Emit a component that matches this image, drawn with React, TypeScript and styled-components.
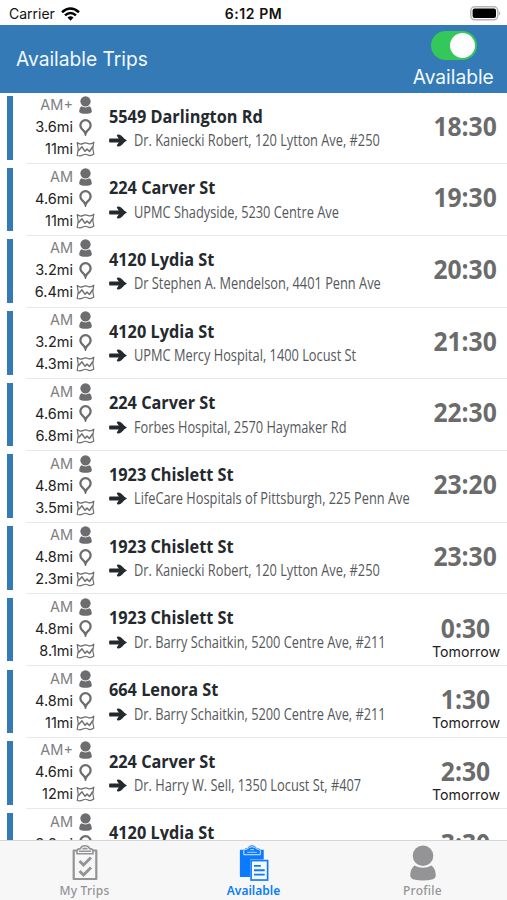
import React from "react";
import styled, { createGlobalStyle } from "styled-components";

const GlobalStyle = createGlobalStyle`
  *, *::before, *::after { box-sizing: border-box; }
  body { margin: 0; background: #fff; overflow: hidden; font-family: Inter, "Liberation Sans", sans-serif; }
  svg { display: block; flex: none; }
`;

const Screen = styled.main`
  width: 507px;
  height: 900px;
  display: flex;
  flex-direction: column;
  overflow: hidden;
  background: #fff;
`;

/* Text drawn narrower or wider than its font's own width. */
const Scaled = styled.span<{ $scale: number; $origin?: string }>`
  display: inline-block;
  white-space: nowrap;
  transform: scaleX(${(p) => p.$scale});
  transform-origin: ${(p) => p.$origin ?? "left"} center;
`;

const StatusBar = styled.div`
  height: 25px;
  flex: none;
  display: grid;
  grid-template-columns: 1fr auto 1fr;
  align-items: center;
  padding: 2px 6px 0 9px;
  color: #111;
  font-size: 14px;
  line-height: 20px;
`;
const Carrier = styled.div`
  display: flex;
  align-items: center;
  gap: 6px;
`;
const Clock = styled.div`
  margin-right: 3px;
  font-weight: 600;
  letter-spacing: 0.55px;
`;
const BatteryBox = styled.div`
  justify-self: end;
`;

const Header = styled.header`
  height: 67.5px;
  flex: none;
  display: flex;
  justify-content: space-between;
  padding: 0 13px 0 16px;
  background: #337ab7;
  color: #f2f8fd;
`;
const HeaderTitle = styled.h1`
  margin: 0;
  font-size: 20px;
  font-weight: 400;
  line-height: 68px;
`;
const Availability = styled.div`
  width: 81px;
  padding-top: 6px;
  display: flex;
  flex-direction: column;
  align-items: center;
  font-size: 20px;
  line-height: 24px;
`;
const Toggle = styled.div`
  width: 46px;
  height: 28.5px;
  flex: none;
  padding: 1.5px;
  margin: 0 0 5px;
  border-radius: 15px;
  background: #34c759;
  display: flex;
  justify-content: flex-end;
`;
const Knob = styled.div`
  width: 25.5px;
  height: 25.5px;
  border-radius: 50%;
  background: #fff;
`;

const List = styled.section`
  flex: 1;
  min-height: 0;
  overflow: hidden;
`;
const Trip = styled.article`
  height: 71.7px;
  display: flex;
  padding-left: 7px;
`;
const Stripe = styled.div`
  width: 6px;
  height: 63.5px;
  flex: none;
  margin: 3.5px 13px 0 0;
  background: #337ab7;
`;
const TripBody = styled.div`
  flex: 1;
  min-width: 0;
  display: flex;
  border-bottom: 1px solid #e8e8ea;
`;
const Metrics = styled.div`
  width: 69px;
  flex: none;
  padding-top: 1.6px;
`;
const Metric = styled.div<{ $muted?: boolean }>`
  height: 22px;
  display: grid;
  grid-template-columns: 47px 18px;
  column-gap: 3px;
  align-items: center;
  justify-items: center;
  font-size: 14.5px;
  line-height: 22px;
  color: ${(p) => (p.$muted ? "#808083" : "#222")};
  > span { justify-self: end; }
  > svg { color: #6d6d70; }
`;
const Places = styled.div`
  flex: 1;
  min-width: 0;
  padding: 10px 0 0 14px;
  font-family: "Open Sans", "Noto Sans", sans-serif;
`;
const Pickup = styled.div`
  height: 25.5px;
  font-size: 18.5px;
  font-weight: 700;
  line-height: 25px;
  color: #24292e;
`;
const Dropoff = styled.div`
  height: 25px;
  display: flex;
  align-items: center;
  gap: 7px;
  font-size: 16px;
  line-height: 25px;
  color: #55585b;
`;
const When = styled.div`
  width: 82px;
  flex: none;
  display: flex;
  flex-direction: column;
  align-items: center;
  padding-top: 16.2px;
`;
const Time = styled.div`
  width: 82px;
  display: flex;
  justify-content: center;
  padding-right: 1px;
  font-family: "Open Sans", "Noto Sans", sans-serif;
  font-size: 26.5px;
  font-weight: 700;
  line-height: 34px;
  color: #6b6b6b;
`;
const Day = styled.div`
  margin-top: -1.8px;
  font-size: 14.2px;
  line-height: 18px;
  color: #222;
`;

const TabBar = styled.nav`
  height: 60px;
  flex: none;
  display: grid;
  grid-template-columns: repeat(3, 1fr);
  border-top: 1px solid #d5d5d7;
  background: #f7f7f8;
`;
const Tab = styled.div<{ $active?: boolean }>`
  display: flex;
  flex-direction: column;
  align-items: center;
  padding-top: 4px;
  font-family: "Noto Sans", sans-serif;
  font-size: 12px;
  font-weight: ${(p) => (p.$active ? 600 : 500)};
  letter-spacing: ${(p) => (p.$active ? "0" : "0.25px")};
  line-height: 16px;
  color: ${(p) => (p.$active ? "#0a7bff" : "#949496")};
  > svg { height: 36px; margin-bottom: 2px; }
`;

const WifiIcon = () => (
  <svg width="19" height="14" viewBox="0 0 19 14" fill="none" stroke="#000" strokeWidth="2.5">
    <path d="M1 5.2Q9.5-2.2 18 5.2" />
    <path d="M4 8.4Q9.5 3.6 15 8.4" />
    <path d="M6.5 10.6Q9.5 8 12.5 10.6L9.5 13.8Z" fill="#000" stroke="none" />
  </svg>
);
const BatteryIcon = () => (
  <svg width="31" height="15" viewBox="0 0 31 15">
    <rect x=".8" y=".8" width="27" height="13" rx="4" fill="#fff" stroke="#b5b5b5" strokeWidth="1.5" />
    <rect x="2.6" y="2.6" width="23.4" height="9.4" rx="2" />
    <path d="M29 5Q31.5 7.2 29 9.5Z" fill="#b5b5b5" />
  </svg>
);
const PersonIcon = ({ width, height }: { width: number; height: number }) => (
  <svg width={width} height={height} viewBox="0 0 26 36" fill="currentColor">
    <circle cx="13" cy="10.7" r="10.3" />
    <path d="M4.500 20.500Q13 25 21.500 20.500Q25.800 24 25.800 30.500Q25.500 33.500 22 34.500Q13 36.500 4 34.500Q.5 33.500 .2 30.500Q.2 24 4.500 20.500Z" />
  </svg>
);
const PinIcon = () => (
  <svg width="13" height="17" viewBox="0 0 13 17" fill="none" stroke="currentColor" strokeWidth="2.3">
    <path d="M6.500 14.800Q5.800 12.400 3.100 10.100A5.100 5.100 0 1 1 9.900 10.100Q7.200 12.400 6.500 14.800Z" />
  </svg>
);
const MapIcon = () => (
  <svg width="19" height="16" viewBox="0 0 19 16" fill="none" stroke="currentColor" strokeWidth="1.2" strokeLinejoin="round">
    <path d="M1.200 1.500Q4 4 6.800 2.600T12 2.500T17.800 1.200L16.800 7.500L17.800 13Q14.500 15.500 12 14T6.800 14T1.200 14.500L2.200 8Z" />
    <path d="M2.200 10L6 5.800L9 10.300L11 8L13.500 10.500L16.800 5.500" strokeWidth="1.4" />
  </svg>
);
const ArrowIcon = () => (
  <svg width="18" height="13" viewBox="0 0 18 13" fill="#24292e">
    <path d="M.5 4.600H9.800L7.800 1.700Q7.800.4 9.800.5Q12 .8 13.500 2.800Q15 4.800 18 6.500Q15 8.200 13.500 10.200Q12 12.200 9.800 12.500Q7.800 12.600 7.800 11.300L9.800 8.400H.5Q-.4 6.500 .5 4.600Z" />
  </svg>
);
const ChecklistIcon = () => (
  <svg width="26" height="36" viewBox="0 0 26 36" fill="none" stroke="currentColor">
    <path d="M6 5.500H1.700V34H24.300V5.500H20" strokeWidth="2.2" strokeLinejoin="round" />
    <path d="M5 8.800V6Q5 3.800 8.500 3.600Q9.500.8 13 .8T17.500 3.600Q21 3.800 21 6V8.800Z" strokeWidth="1.6" />
    <path d="M7 6.200H19M10.500 3.600H15.500" strokeWidth="1.6" />
    <path d="M7.500 16L11.500 20L19 12.500M7.500 26L11.500 30L19 22.500" strokeWidth="3" />
  </svg>
);
const ClipboardIcon = () => (
  <svg width="30" height="36" viewBox="0 0 30 37" fill="none" stroke="currentColor">
    <path d="M1.500 5H25V15H11V33H1.500Q.5 33 .5 32V6Q.5 5 1.500 5Z" fill="currentColor" stroke="none" />
    <path d="M4.500 9.500V5.500Q5 3.500 8.500 3.500Q9.500.8 13 .8T17.500 3.500Q21 3.500 21.500 5.500V9.500Z" fill="currentColor" strokeWidth="1" />
    <path d="M4.500 10H21.500V6Q20.500 4 17.500 4Q16.500 1.800 13 1.800T8.500 4Q4.500 4 4.500 6Z" stroke="#f7f7f8" strokeWidth=".9" />
    <path d="M8 7.500H18M11 4.800H15" stroke="#b5d7ff" strokeWidth="1" />
    <rect x="12" y="16" width="17" height="20" fill="#f7f7f8" strokeWidth="1.7" />
    <path d="M15 21.500H22M15 26H26M15 30.500H26" strokeWidth="1.9" />
  </svg>
);

type TripData = [load: string, away: string, length: string, pickup: string, dropoff: string, time: string, day?: string];

const trips: TripData[] = [
  ["AM+", "3.6mi", "11mi", "5549 Darlington Rd", "Dr. Kaniecki Robert, 120 Lytton Ave, #250", "18:30"],
  ["AM", "4.6mi", "11mi", "224 Carver St", "UPMC Shadyside, 5230 Centre Ave", "19:30"],
  ["AM", "3.2mi", "6.4mi", "4120 Lydia St", "Dr Stephen A. Mendelson, 4401 Penn Ave", "20:30"],
  ["AM", "3.2mi", "4.3mi", "4120 Lydia St", "UPMC Mercy Hospital, 1400 Locust St", "21:30"],
  ["AM", "4.6mi", "6.8mi", "224 Carver St", "Forbes Hospital, 2570 Haymaker Rd", "22:30"],
  ["AM", "4.8mi", "3.5mi", "1923 Chislett St", "LifeCare Hospitals of Pittsburgh, 225 Penn Ave", "23:20"],
  ["AM", "4.8mi", "2.3mi", "1923 Chislett St", "Dr. Kaniecki Robert, 120 Lytton Ave, #250", "23:30"],
  ["AM", "4.8mi", "8.1mi", "1923 Chislett St", "Dr. Barry Schaitkin, 5200 Centre Ave, #211", "0:30", "Tomorrow"],
  ["AM", "4.8mi", "11mi", "664 Lenora St", "Dr. Barry Schaitkin, 5200 Centre Ave, #211", "1:30", "Tomorrow"],
  ["AM+", "4.6mi", "12mi", "224 Carver St", "Dr. Harry W. Sell, 1350 Locust St, #407", "2:30", "Tomorrow"],
  ["AM", "3.2mi", "", "4120 Lydia St", "", "3:30"],
];

export default function App() {
  return (
    <Screen>
      <GlobalStyle />
      <StatusBar>
        <Carrier>
          <span>Carrier</span>
          <WifiIcon />
        </Carrier>
        <Clock>6:12 PM</Clock>
        <BatteryBox><BatteryIcon /></BatteryBox>
      </StatusBar>
      <Header>
        <HeaderTitle><Scaled $scale={0.96}>Available Trips</Scaled></HeaderTitle>
        <Availability>
          <Toggle><Knob /></Toggle>
          <Scaled $scale={0.96} $origin="center">Available</Scaled>
        </Availability>
      </Header>
      <List>
        {trips.map(([load, away, length, pickup, dropoff, time, day], i) => (
          <Trip key={i}>
            <Stripe />
            <TripBody>
              <Metrics>
                <Metric $muted><span>{load}</span><PersonIcon width={13} height={18} /></Metric>
                <Metric><span>{away}</span><PinIcon /></Metric>
                {length && <Metric><span>{length}</span><MapIcon /></Metric>}
              </Metrics>
              <Places>
                <Pickup><Scaled $scale={0.88}>{pickup}</Scaled></Pickup>
                {dropoff && <Dropoff><ArrowIcon /><Scaled $scale={0.8}>{dropoff}</Scaled></Dropoff>}
              </Places>
              <When>
                <Time><Scaled $scale={0.93} $origin="center">{time}</Scaled></Time>
                {day && <Day>{day}</Day>}
              </When>
            </TripBody>
          </Trip>
        ))}
      </List>
      <TabBar>
        <Tab><ChecklistIcon />My Trips</Tab>
        <Tab $active><ClipboardIcon />Available</Tab>
        <Tab><PersonIcon width={26} height={36} />Profile</Tab>
      </TabBar>
    </Screen>
  );
}
